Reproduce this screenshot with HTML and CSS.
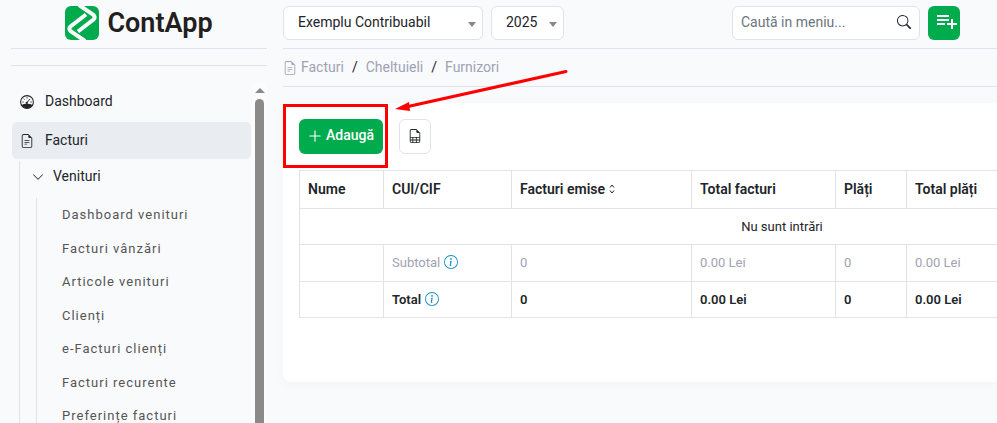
FILE: index.html
```html
<!DOCTYPE html>
<html lang="ro">
<head>
  <meta charset="utf-8">
  <meta name="viewport" content="width=device-width, initial-scale=1">
  <title>ContApp</title>
  <link rel="stylesheet" href="styles.css">
</head>
<body>
  <!-- shared icons -->
  <svg class="sprite" aria-hidden="true">
    <symbol id="file-text" viewBox="0 0 16 16">
      <path d="M5.5 7a.5.5 0 0 0 0 1h5a.5.5 0 0 0 0-1h-5zM5 9.5a.5.5 0 0 1 .5-.5h5a.5.5 0 0 1 0 1h-5a.5.5 0 0 1-.5-.5zm0 2a.5.5 0 0 1 .5-.5h2a.5.5 0 0 1 0 1h-2a.5.5 0 0 1-.5-.5z"/>
      <path d="M9.5 0H4a2 2 0 0 0-2 2v12a2 2 0 0 0 2 2h8a2 2 0 0 0 2-2V4.5L9.5 0zm0 1v2A1.5 1.5 0 0 0 11 4.5h2V14a1 1 0 0 1-1 1H4a1 1 0 0 1-1-1V2a1 1 0 0 1 1-1h5.5z"/>
    </symbol>
    <symbol id="info" viewBox="0 0 16 16">
      <path d="M8 15A7 7 0 1 1 8 1a7 7 0 0 1 0 14zm0 1A8 8 0 1 0 8 0a8 8 0 0 0 0 16z"/>
      <path d="m8.93 6.588-2.29.287-.082.38.45.083c.294.07.352.176.288.469l-.738 3.468c-.194.897.105 1.319.808 1.319.545 0 1.178-.252 1.465-.598l.088-.416c-.2.176-.492.246-.686.246-.275 0-.375-.193-.304-.533L8.93 6.588zM9 4.5a1 1 0 1 1-2 0 1 1 0 0 1 2 0z"/>
    </symbol>
  </svg>

  <div class="layout">
    <aside class="sidebar">
      <a class="brand" href="#">
        <svg class="logo" viewBox="0 0 34 34" aria-hidden="true">
          <rect width="34" height="34" rx="6" fill="#00ab4e"/>
          <path d="M14-1 28 8.500Q31 11 28.500 13.500L13 25.500M20 35 6 25.500Q3 23 5.500 20.500L21 8.500" fill="none" stroke="#f9fafc" stroke-width="4"/>
        </svg>
        ContApp
      </a>
      <div class="menu-area">
        <nav class="menu">
          <a class="menu-item" href="#">
            <svg class="icon" viewBox="0 0 16 16" aria-hidden="true">
              <circle cx="8" cy="8" r="7.3" fill="none" stroke="currentColor" stroke-width="1.2"/>
              <path d="M1.700 11.500Q4 10 8 10T14.300 11.500Q12 15.300 8 15.300T1.700 11.500z"/>
              <path d="M7.500 9 11.500 4.500M8 2.500V4M4.200 4.200l1 1M2.600 8h1.500M11.900 8h1.500" stroke="currentColor" stroke-width="1.100"/>
              <circle cx="7.700" cy="9" r="1.300"/>
            </svg>
            Dashboard
          </a>
          <a class="menu-item active" href="#">
            <svg class="icon" aria-hidden="true"><use href="#file-text"/></svg>
            Facturi
          </a>
          <div class="submenu">
            <a class="submenu-title" href="#">
              <svg class="chevron" viewBox="0 0 16 16" aria-hidden="true"><path d="M1.600 4.600a.5.5 0 0 1 .7 0L8 10.300l5.700-5.700a.5.5 0 0 1 .7.7l-6 6a.5.5 0 0 1-.8 0l-6-6a.5.5 0 0 1 0-.7z"/></svg>
              Venituri
            </a>
            <ul class="links">
              <li><a href="#">Dashboard venituri</a></li>
              <li><a href="#">Facturi vânzări</a></li>
              <li><a href="#">Articole venituri</a></li>
              <li><a href="#">Clienți</a></li>
              <li><a href="#">e-Facturi clienți</a></li>
              <li><a href="#">Facturi recurente</a></li>
              <li><a href="#">Preferințe facturi</a></li>
            </ul>
          </div>
        </nav>
        <div class="scrollbar"><span class="scroll-up"></span><span class="scroll-thumb"></span></div>
      </div>
    </aside>

    <main class="main">
      <header class="topbar">
        <div class="select company">
          <select aria-label="Contribuabil"><option>Exemplu Contribuabil</option></select>
        </div>
        <div class="select year">
          <select aria-label="An"><option>2025</option></select>
        </div>
        <form class="search">
          <input type="text" placeholder="Caută in meniu..." aria-label="Caută in meniu">
          <button type="button" aria-label="Caută">
            <svg class="icon" viewBox="0 0 16 16" aria-hidden="true"><path d="M11.742 10.344a6.5 6.5 0 1 0-1.397 1.398h-.001c.03.04.062.078.098.115l3.85 3.85a1 1 0 0 0 1.415-1.414l-3.85-3.85a1.007 1.007 0 0 0-.115-.1zM12 6.5a5.5 5.5 0 1 1-11 0 5.5 5.5 0 0 1 11 0z"/></svg>
          </button>
        </form>
        <button class="quick-add" type="button" aria-label="Adaugă rapid">
          <svg viewBox="0 0 24 24" aria-hidden="true"><path d="M14 10H2v2h12v-2zm0-4H2v2h12V6zm4 8v-4h-2v4h-4v2h4v4h2v-4h4v-2h-4zM2 16h8v-2H2v2z"/></svg>
        </button>
      </header>

      <nav class="breadcrumb">
        <a href="#"><svg class="icon" aria-hidden="true"><use href="#file-text"/></svg>Facturi</a>
        <span>/</span>
        <a href="#">Cheltuieli</a>
        <span>/</span>
        <a href="#">Furnizori</a>
      </nav>

      <section class="card">
        <div class="actions">
          <button class="btn-add" type="button">
            <svg viewBox="0 0 14 14" aria-hidden="true"><path d="M7 1v12M1 7h12" stroke="currentColor" stroke-width="1.300" stroke-linecap="round"/></svg>
            Adaugă
          </button>
          <button class="btn-export" type="button" aria-label="Export">
            <svg class="icon" viewBox="0 0 16 16" aria-hidden="true"><path d="M14 14V4.5L9.5 0H4a2 2 0 0 0-2 2v12a2 2 0 0 0 2 2h8a2 2 0 0 0 2-2zM9.5 3A1.5 1.5 0 0 0 11 4.5h2V9H3V2a1 1 0 0 1 1-1h5.5v2zM3 12v-2h2v2H3zm0 1h2v2H4a1 1 0 0 1-1-1v-1zm3 2v-2h3v2H6zm4 0v-2h3v1a1 1 0 0 1-1 1h-2zm3-3h-3v-2h3v2zm-7 0v-2h3v2H6z"/></svg>
          </button>
        </div>
        <div class="table-wrap">
          <table>
            <colgroup>
              <col class="col-name"><col class="col-cui"><col class="col-issued"><col class="col-total"><col class="col-paid"><col>
            </colgroup>
            <thead>
              <tr>
                <th>Nume</th>
                <th>CUI/CIF</th>
                <th>Facturi emise <svg class="sort" viewBox="0 0 6 10" aria-hidden="true"><path d="M1 3.500 3 1l2 2.500M1 6.500 3 9l2-2.500" fill="none" stroke="currentColor"/></svg></th>
                <th>Total facturi</th>
                <th>Plăți</th>
                <th>Total plăți</th>
              </tr>
            </thead>
            <tbody>
              <tr><td class="empty" colspan="6">Nu sunt intrări</td></tr>
            </tbody>
            <tfoot>
              <tr class="subtotal">
                <td></td>
                <td>Subtotal <svg class="info" aria-hidden="true"><use href="#info"/></svg></td>
                <td>0</td>
                <td>0.00 Lei</td>
                <td>0</td>
                <td>0.00 Lei</td>
              </tr>
              <tr class="total">
                <td></td>
                <td>Total <svg class="info" aria-hidden="true"><use href="#info"/></svg></td>
                <td>0</td>
                <td>0.00 Lei</td>
                <td>0</td>
                <td>0.00 Lei</td>
              </tr>
            </tfoot>
          </table>
        </div>
        <!-- red marker over the add button -->
        <svg class="marker" viewBox="0 0 288 104" aria-hidden="true">
          <rect x="1.500" y="37.500" width="102" height="61" fill="none" stroke="red" stroke-width="3"/>
          <path d="M283 3.500 125 38.500" stroke="red" stroke-width="3" stroke-linecap="round"/>
          <path d="M112 41 126 34 127 43z" fill="red"/>
        </svg>
      </section>
    </main>
  </div>
</body>
</html>
```

FILE: styles.css
```css
* {
  box-sizing: border-box;
}
body {
  margin: 0;
  background: #f9fafc;
  color: #212529;
  font-family: Roboto, "Liberation Sans", sans-serif;
  font-size: 14px;
  line-height: 1.5;
}
a {
  color: inherit;
  text-decoration: none;
}
button, input, select {
  font: inherit;
  color: inherit;
}
button {
  cursor: pointer;
}
svg {
  fill: currentColor;
}
.sprite {
  display: none;
}
.icon {
  width: 14px;
  height: 14px;
  flex: none;
}
.layout {
  display: flex;
  height: 100vh;
  overflow: hidden;
}

/* sidebar */
.sidebar {
  flex: none;
  width: 283px;
  padding: 0 16px 0 11px;
  display: flex;
  flex-direction: column;
}
.brand {
  display: flex;
  align-items: center;
  justify-content: center;
  gap: 8px;
  height: 49px;
  padding-bottom: 2px;
  border-bottom: 1px solid #e1e2f0;
  color: #231f20;
  font-size: 27px;
  font-weight: 600;
  flex: none;
}
.logo {
  width: 34px;
  height: 34px;
}
.menu-area {
  display: flex;
  flex: 1;
  min-height: 0;
  margin-top: 16px;
  border-top: 1px solid #e1e3e8;
}
.menu {
  flex: 1;
  overflow: hidden;
  padding: 17px 1px 0;
}
.menu-item {
  display: flex;
  align-items: center;
  gap: 11px;
  padding: 8px;
  margin-bottom: 2px;
  border-radius: 5px;
}
.menu-item.active {
  background: #e9ecf1;
}
.submenu {
  margin-left: 7px;
  border-left: 1px solid #e1e3e8;
}
.submenu-title {
  display: flex;
  align-items: center;
  gap: 9px;
  padding: 5px 12px 11px;
}
.chevron {
  width: 12px;
  height: 12px;
}
.links {
  list-style: none;
  margin: 0 0 0 16px;
  padding: 0 0 0 25px;
  border-left: 1px solid #e1e2f0;
  color: #555;
  font-size: 13px;
  letter-spacing: 1px;
}
.links a {
  display: block;
  padding: 7px 0;
}
.scrollbar {
  width: 15px;
  margin-top: 16px;
  padding-top: 6px;
  background: #fcfcfc;
  display: flex;
  flex-direction: column;
  align-items: center;
  gap: 6px;
}
.scroll-up {
  border: 5px solid transparent;
  border-top: 0;
  border-bottom-color: #8a8a8a;
}
.scroll-thumb {
  flex: 1;
  width: 9px;
  border-radius: 5px 5px 0 0;
  background: #8a8a8a;
}

/* top bar */
.main {
  flex: 1;
  min-width: 0;
}
.topbar {
  display: flex;
  align-items: center;
  gap: 8px;
  height: 49px;
  padding: 0 37px 2px 0;
  border-bottom: 1px solid #e1e2f0;
}
.select {
  position: relative;
}
.select::after {
  content: "";
  position: absolute;
  right: 7px;
  top: 16px;
  border: 4px solid transparent;
  border-top: 5px solid #888;
  border-bottom: 0;
  pointer-events: none;
}
.select select, .search {
  width: 100%;
  height: 34px;
  border: 1px solid #e1e2f0;
  border-radius: 6px;
  background: #fff;
}
.select select {
  display: block;
  appearance: none;
  padding: 0 14px 2px;
}
.company {
  width: 200px;
}
.year {
  width: 73px;
}
.search {
  display: flex;
  align-items: center;
  width: 188px;
  margin-left: auto;
  padding: 0 8px 2px;
}
.search input {
  flex: 1;
  min-width: 0;
  padding: 0;
  border: 0;
  outline: 0;
  background: none;
}
.search input::placeholder {
  color: #6c757d;
}
.search button {
  display: flex;
  padding: 0;
  border: 0;
  background: none;
}
.quick-add {
  display: flex;
  align-items: center;
  justify-content: center;
  width: 32px;
  height: 34px;
  padding: 0;
  border: 0;
  border-radius: 6px;
  background: #00ab4e;
  color: #fff;
}
.quick-add svg {
  width: 24px;
  height: 24px;
  margin: 0 0 4px 5px;
  flex: none;
}
.breadcrumb {
  display: flex;
  gap: 8px;
  height: 38px;
  align-items: center;
  border-bottom: 1px solid #e1e2f0;
}
.breadcrumb a {
  display: flex;
  align-items: center;
  gap: 4px;
  color: #9fa2b4;
}

/* card */
.card {
  position: relative;
  min-height: 279px;
  margin-top: 16px;
  padding: 16px 0 16px 16px;
  border-radius: 8px 0 0 8px;
  background: #fff;
  box-shadow: 0 2px 12px rgba(0, 0, 0, 0.03);
}
.actions {
  display: flex;
  gap: 16px;
  margin-bottom: 16px;
}
.btn-add, .btn-export {
  display: flex;
  align-items: center;
  justify-content: center;
  height: 35px;
  border-radius: 6px;
}
.btn-add {
  gap: 5px;
  padding: 0 9px 2px 10px;
  border: 0;
  background: #00ab4e;
  color: #fff;
  font-weight: 500;
}
.btn-add svg {
  width: 12px;
  height: 12px;
}
.btn-export {
  width: 32px;
  padding: 0 0 2px;
  border: 1px solid #e1e2f0;
  background: #fff;
}
.table-wrap {
  overflow: hidden;
}
table {
  table-layout: fixed;
  width: 966px;
  border-collapse: collapse;
  font-size: 13px;
}
th, td {
  height: 36px;
  padding: 0 8px;
  border: 1px solid #e1e2f0;
  text-align: left;
}
th {
  height: 38px;
  font-size: 14px;
  font-weight: 600;
}
.col-name { width: 84px; }
.col-cui { width: 128px; }
.col-issued { width: 180px; }
.col-total { width: 144px; }
.col-paid { width: 71px; }
.empty {
  text-align: center;
}
.subtotal td {
  height: 37px;
  color: #9fa2b4;
}
.total {
  font-weight: 600;
}
.sort {
  width: 6px;
  height: 10px;
}
.info {
  width: 14px;
  height: 14px;
  margin-left: 1px;
  color: #1a8fc4;
  vertical-align: -2px;
}
.marker {
  position: absolute;
  left: 0;
  top: -35px;
  width: 288px;
  height: 104px;
  pointer-events: none;
}
```
